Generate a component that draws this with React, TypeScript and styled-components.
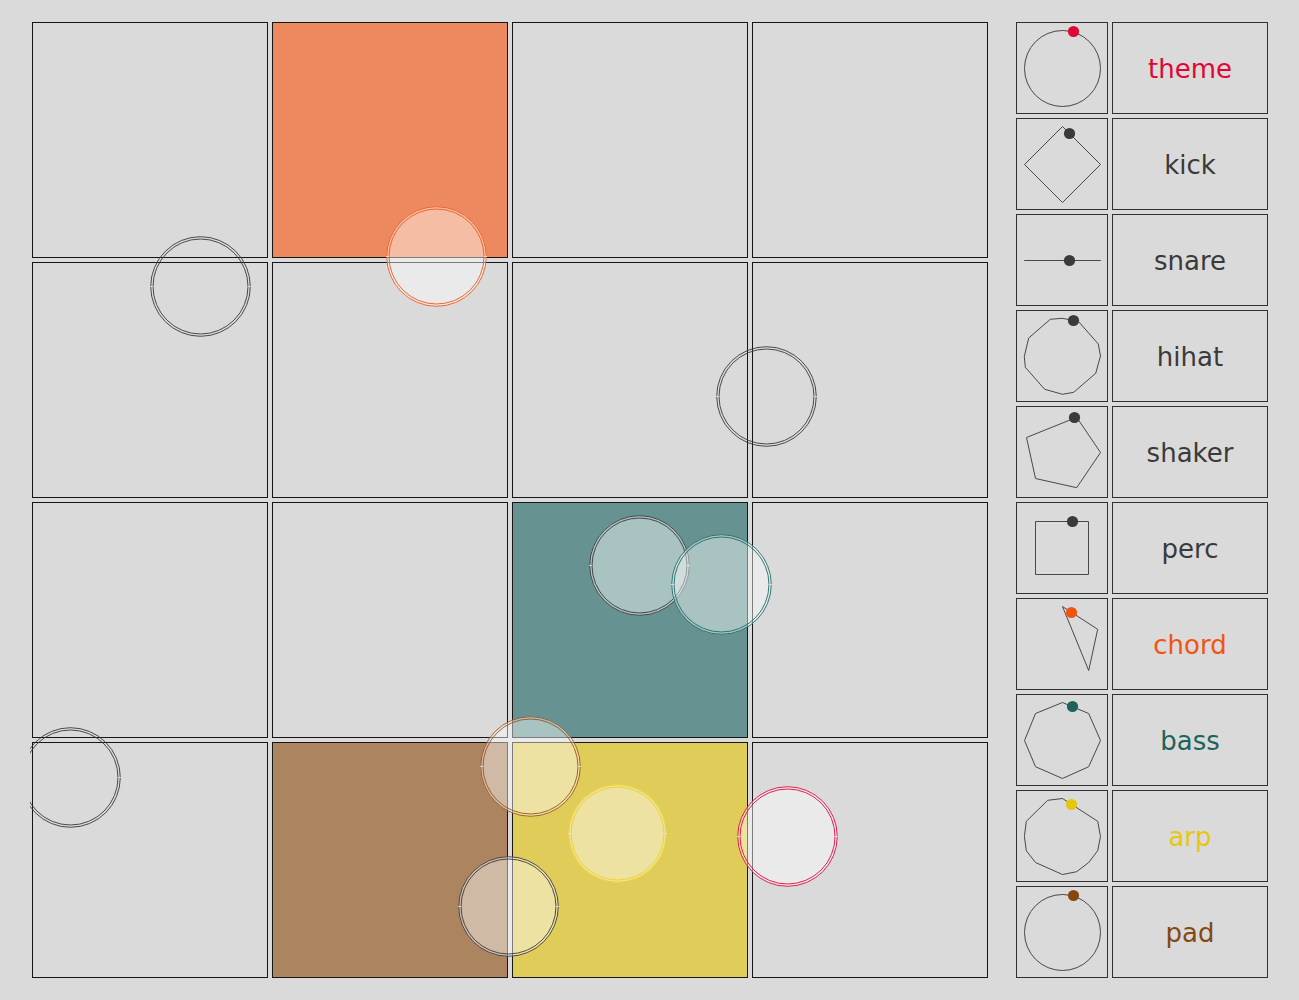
import React from "react";
import styled, { createGlobalStyle } from "styled-components";

const INK = "#3a3a3a";

const GlobalStyle = createGlobalStyle`
  * { box-sizing: border-box; }
  body {
    margin: 0;
    background: #dadada;
    font-family: "DejaVu Sans", Verdana, sans-serif;
  }
`;

const Page = styled.main`
  display: flex;
  align-items: flex-start;
  gap: 28px;
  padding: 22px 31px 22px 32px;
`;

const Board = styled.section`
  position: relative;
  flex: 1;
  min-width: 0;
`;

const Grid = styled.div`
  display: grid;
  grid-template-columns: repeat(4, 1fr);
  gap: 4px;
`;

const Cell = styled.div<{ $fill?: string }>`
  aspect-ratio: 1;
  border: 1px solid #161616;
  background: ${(p) => p.$fill ?? "transparent"};
`;

const Balls = styled.svg`
  position: absolute;
  inset: -2px;
  width: calc(100% + 4px);
  height: calc(100% + 4px);
  pointer-events: none;
`;

const Tracks = styled.ul`
  flex: none;
  display: grid;
  gap: 4px;
  margin: 0;
  padding: 0;
  list-style: none;
`;

const Track = styled.li`
  display: grid;
  grid-template-columns: 92px 156px;
  gap: 4px;
  height: 92px;
`;

const Rhythm = styled.div`
  border: 1px solid #303030;
`;

const Shape = styled.svg`
  display: block;
  width: 100%;
  height: 100%;
  fill: none;
  stroke: #484848;
`;

const TrackButton = styled.button<{ $color: string }>`
  padding: 2px 0 0;
  border: 1px solid #303030;
  background: transparent;
  color: ${(p) => p.$color};
  font: inherit;
  font-size: 26px;
  line-height: 32px;
  cursor: pointer;
`;

const fills: Record<number, string> = {
  1: "#ec895e",
  10: "#669292",
  13: "#ac845f",
  14: "#e0cc59",
};

type BallData = { x: number; y: number; color: string; radius?: number; lit?: boolean };

// Centres in board units; the board is 956 units wide.
const balls: BallData[] = [
  { x: 168.5, y: 264.5, color: INK },
  { x: 734.5, y: 374.5, color: INK },
  { x: 38.5, y: 755.5, color: INK },
  { x: 404.5, y: 234.5, color: "#ee5a1c", lit: true },
  { x: 607.5, y: 543.5, color: INK, lit: true },
  { x: 689.5, y: 562.5, color: "#1f6a66", lit: true },
  { x: 498.5, y: 744.5, color: "#96541f", lit: true },
  { x: 476.5, y: 884.5, color: INK, lit: true },
  { x: 585.5, y: 811.5, color: "#ebd01e", radius: 49, lit: true },
  { x: 755.5, y: 814.5, color: "#de0a3e", lit: true },
];

function Ball({ x, y, color, radius = 50, lit }: BallData) {
  return (
    <g fill="none">
      {lit && <circle cx={x} cy={y} r={radius} fill="#fff" fillOpacity={0.44} />}
      <circle cx={x} cy={y} r={radius - 0.2} stroke={color} strokeOpacity={0.9} />
      <circle cx={x} cy={y} r={radius - 2.5} stroke={color} strokeOpacity={0.9} />
      <path
        d={`M${x - radius - 0.5} ${y}h3M${x + radius - 2.5} ${y}h3`}
        stroke="#e6e6e6"
        strokeOpacity={0.8}
      />
    </g>
  );
}

type TrackData = { name: string; color: string; dot: [number, number]; points?: string };

const tracks: TrackData[] = [
  { name: "theme", color: "#e00635", dot: [57.5, 9.5] },
  { name: "kick", color: INK, dot: [53.5, 15.5], points: "46.5,8.5 84.5,46.5 46.5,84.5 8.5,46.5" },
  { name: "snare", color: INK, dot: [53.5, 46.5], points: "8.5,46.5 84.5,46.5" },
  {
    name: "hihat",
    color: INK,
    dot: [57.5, 10.5],
    points:
      "34.3,9.3 46,8.3 62.3,11.3 82.3,34 84.5,46 79.7,63.3 57.7,82.3 46.5,84.3 28.7,79.3 9.3,57.3 8.3,46.5 12.7,28",
  },
  {
    name: "shaker",
    color: INK,
    dot: [58.5, 11.5],
    points: "60.7,11.3 84.5,46.5 60.7,81.7 19.5,72.5 10.5,31.5",
  },
  { name: "perc", color: INK, dot: [56.5, 19.5], points: "19.5,19.5 72.5,19.5 72.5,72.5 19.5,72.5" },
  { name: "chord", color: "#f2540f", dot: [55.5, 14.5], points: "46.5,8.5 81.7,31.3 72.7,72.5" },
  {
    name: "bass",
    color: "#1f625c",
    dot: [56.5, 12.5],
    points: "46.5,8.5 72.7,19.5 84.5,46.5 72.7,72.7 46.5,84.5 19.5,72.7 8.5,46.5 19.5,19.5",
  },
  {
    name: "arp",
    color: "#e6c70d",
    dot: [55.5, 14.5],
    points:
      "46.5,8.5 81.7,31.3 84.5,46.5 81.7,60.7 72.7,72.5 60.7,81.7 46.5,84.5 19.5,72.5 10.3,60.7 8.4,46.5 10.3,31.3 31.7,10.3",
  },
  { name: "pad", color: "#87480f", dot: [57.5, 9.5] },
];

export default function App() {
  return (
    <>
      <GlobalStyle />
      <Page>
        <Board aria-label="Board">
          <Grid>
            {Array.from({ length: 16 }, (_, i) => (
              <Cell key={i} $fill={fills[i]} />
            ))}
          </Grid>
          <Balls viewBox="-2 -2 960 960" aria-hidden="true">
            {balls.map((ball) => (
              <Ball key={`${ball.x}-${ball.y}`} {...ball} />
            ))}
          </Balls>
        </Board>
        <Tracks>
          {tracks.map(({ name, color, dot, points }) => (
            <Track key={name}>
              <Rhythm>
                <Shape viewBox="1 1 90 90" aria-hidden="true">
                  {points ? <polygon points={points} /> : <circle cx={46.5} cy={46.5} r={38} />}
                  <circle cx={dot[0]} cy={dot[1]} r={5.6} fill={color} stroke="none" />
                </Shape>
              </Rhythm>
              <TrackButton type="button" $color={color}>
                {name}
              </TrackButton>
            </Track>
          ))}
        </Tracks>
      </Page>
    </>
  );
}
